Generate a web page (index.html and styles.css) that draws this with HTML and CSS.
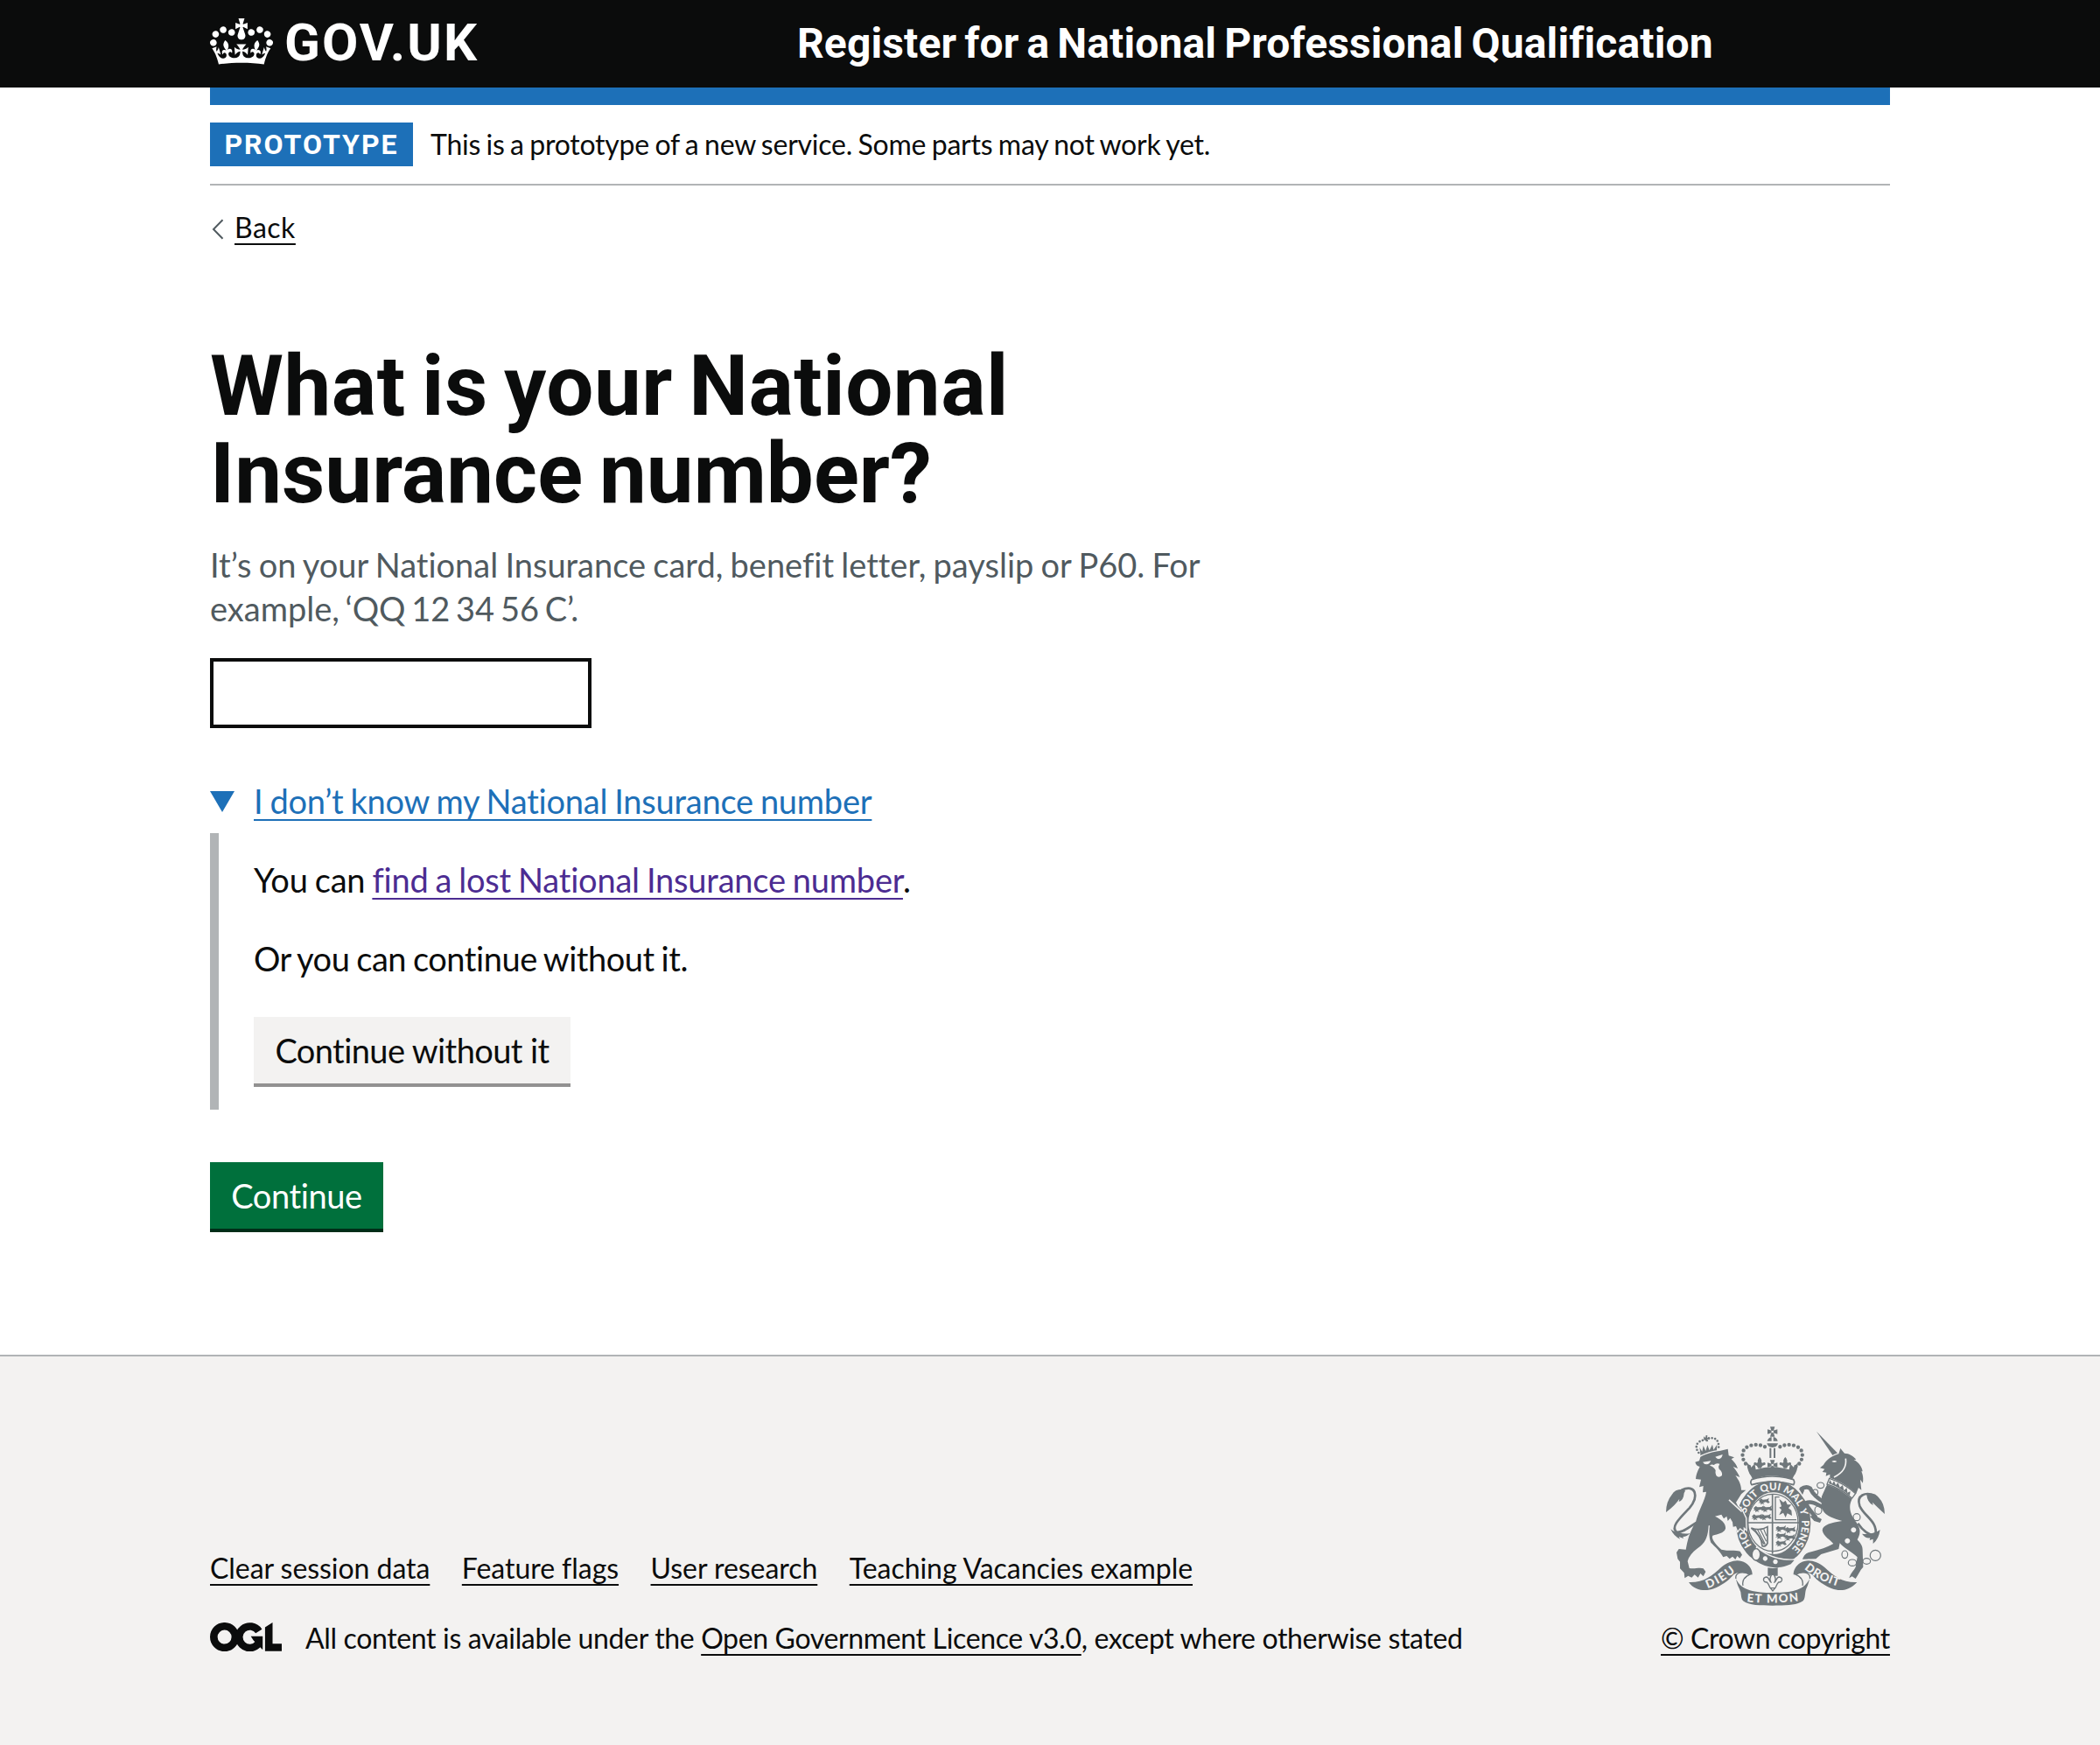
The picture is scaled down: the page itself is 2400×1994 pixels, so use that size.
FILE: index.html
```html
<!DOCTYPE html>
<html lang="en">
<head>
<meta charset="utf-8">
<title>What is your National Insurance number?</title>
<link rel="stylesheet" href="styles.css">
</head>
<body>
<header class="header">
  <div class="container header-inner">
    <a class="logo" href="#">
      <svg class="logo-crown" viewBox="0 0 132 97" aria-hidden="true"><path d="M25 30.2c3.5 1.5 7.7-.2 9.1-3.7 1.5-3.6-.2-7.8-3.9-9.2-3.6-1.4-7.6.3-9.1 3.9-1.4 3.5.3 7.5 3.9 9zM9 39.5c3.6 1.5 7.8-.2 9.2-3.7 1.5-3.6-.2-7.8-3.9-9.1-3.6-1.5-7.6.2-9.1 3.8-1.4 3.5.3 7.5 3.8 9zM4.4 57.2c3.5 1.5 7.7-.2 9.1-3.8 1.5-3.6-.2-7.7-3.9-9.1-3.5-1.5-7.6.3-9.1 3.8-1.4 3.5.3 7.6 3.9 9.1zm38.3-21.4c3.5 1.5 7.7-.2 9.1-3.8 1.5-3.6-.2-7.7-3.9-9.1-3.6-1.5-7.6.3-9.1 3.8-1.3 3.6.4 7.7 3.9 9.1zm64.4-5.6c-3.6 1.5-7.8-.2-9.1-3.7-1.5-3.6.2-7.8 3.8-9.2 3.6-1.4 7.7.3 9.2 3.9 1.3 3.5-.4 7.5-3.9 9zm15.9 9.3c-3.6 1.5-7.7-.2-9.1-3.7-1.5-3.6.2-7.8 3.7-9.1 3.6-1.5 7.7.2 9.2 3.8 1.5 3.5-.3 7.5-3.8 9zm4.7 17.7c-3.6 1.5-7.8-.2-9.2-3.8-1.5-3.6.2-7.7 3.9-9.1 3.6-1.5 7.7.3 9.2 3.8 1.3 3.5-.4 7.6-3.9 9.1zM89.3 35.8c-3.6 1.5-7.8-.2-9.2-3.8-1.4-3.6.2-7.7 3.9-9.1 3.6-1.5 7.7.3 9.2 3.8 1.4 3.6-.3 7.7-3.9 9.1zM69.7 17.7l8.9 4.7V9.3l-8.9 2.8c-.2-.3-.5-.6-.9-.9L72.4 0H59.6l3.5 11.2c-.3.3-.6.5-.9.9l-8.8-2.8v13.1l8.8-4.7c.3.3.6.7.9.9l-5 15.4v.1c-.2.8-.4 1.6-.4 2.4 0 4.1 3.1 7.5 7 8.1h.2c.3 0 .7.1 1 .1.4 0 .7 0 1-.1h.2c4-.6 7.1-4.1 7.1-8.1 0-.8-.1-1.7-.4-2.4V34l-5.1-15.4c.4-.2.7-.6 1-.9zM66 92.8c16.9 0 32.8 1.1 47.1 3.2 4-16.9 8.9-26.7 14-33.5l-9.6-3.4c1 4.9 1.1 7.2 0 10.2-1.5-1.4-3-4.3-4.2-8.7L108.6 76c2.8-2 5-3.2 7.5-3.3-4.4 9.4-10 11.9-13.6 11.2-4.3-.8-6.3-4.6-5.6-7.9 1-4.7 5.7-5.9 8-.5 4.3-8.7-3-11.4-7.6-8.8 7.1-7.2 7.9-13.5 2.1-21.1-8 6.1-8.1 12.3-4.5 20.8-4.7-5.4-12.1-2.5-9.5 6.2 3.4-5.2 7.9-2 7.2 3.1-.6 4.3-6.4 7.8-13.5 7.2-10.3-.9-10.9-8-11.2-13.8 2.5-.5 7.1 1.8 11 7.3L80.2 60c-4.1 4.4-8 5.3-12.3 5.4 1.4-4.4 8-11.6 8-11.6H55.5s6.4 7.2 7.9 11.6c-4.2-.1-8-1-12.3-5.4l1.4 16.4c3.9-5.5 8.5-7.7 10.9-7.3-.3 5.8-.9 12.8-11.1 13.8-7.2.6-12.9-2.9-13.5-7.2-.7-5 3.8-8.3 7.1-3.1 2.7-8.7-4.6-11.6-9.4-6.2 3.7-8.5 3.6-14.7-4.6-20.8-5.8 7.6-5 13.9 2.2 21.1-4.7-2.6-11.9.1-7.7 8.8 2.3-5.5 7.1-4.2 8.1.5.7 3.3-1.3 7.1-5.7 7.9-3.5.7-9-1.8-13.5-11.2 2.5.1 4.7 1.3 7.5 3.3l-4.7-15.4c-1.2 4.4-2.7 7.2-4.3 8.7-1.1-3-.9-5.3 0-10.2l-9.5 3.4c5 6.9 9.9 16.7 14 33.5 14.8-2.1 30.8-3.2 47.7-3.2z"/></svg>
      <span class="logo-text">GOV.UK</span>
    </a>
    <a class="service-name" href="#">Register for a National Professional Qualification</a>
  </div>
</header>

<div class="container">
  <div class="phase-banner">
    <strong class="tag">PROTOTYPE</strong>
    <span class="phase-text">This is a prototype of a new service. Some parts may not work yet.</span>
  </div>

  <a class="back-link" href="#">
    <svg class="chevron" viewBox="0 0 14 24" aria-hidden="true"><path d="M12.500 1.200L2 12l10.500 10.800"/></svg>
    <span class="underline">Back</span>
  </a>

  <main class="main">
    <h1 class="title"><span class="title-a">What is your National</span><br><span class="title-b">Insurance number?</span></h1>
    <p class="hint"><span class="hint-a">It’s on your National Insurance card, benefit letter, payslip or P60. For</span><br><span class="hint-b">example, ‘QQ 12 34 56 C’.</span></p>
    <input class="input" type="text" aria-label="National Insurance number">

    <div class="details">
      <div class="summary">
        <svg class="triangle" viewBox="0 0 28 24" aria-hidden="true"><path d="M0 0h28L14 24z"/></svg>
        <span class="underline">I don’t know my National Insurance number</span>
      </div>
      <div class="details-body">
        <p class="para">You can <a class="underline visited" href="#">find a lost National Insurance number</a>.</p>
        <p class="para para-or">Or you can continue without it.</p>
        <button class="button button-secondary">Continue without it</button>
      </div>
    </div>
    <button class="button button-primary">Continue</button>
  </main>
</div>

<footer class="footer">
  <div class="container footer-inner">
    <div class="footer-meta">
      <nav class="footer-links">
        <a class="underline" href="#">Clear session data</a>
        <a class="underline" href="#">Feature flags</a>
        <a class="underline" href="#">User research</a>
        <a class="underline" href="#">Teaching Vacancies example</a>
      </nav>
      <div class="licence">
        <svg class="ogl" viewBox="0 0 483.200 195.700" aria-label="OGL">
          <circle cx="97.800" cy="97.800" r="72.500"/>
          <path d="M329 59A72.500 72.500 0 1 0 325 144"/>
          <path class="ogl-fill" d="M275 93h80v88l-3 1-60-62zM370.800 32.400L421.500 0v142.800h61.700v50.700H370.800z"/>
        </svg>
        <span class="licence-text">All content is available under the <a class="underline" href="#">Open Government Licence v3.0</a>, except where otherwise stated</span>
      </div>
    </div>
    <div class="copyright">
      <svg class="crest" viewBox="72 58 750 616" aria-hidden="true">
        <defs>
          <path id="garter" d="M440 504A98 114 0 1 1 440.100 504"/>
          <path id="ribbon-left" d="M214 613Q266 596 322 546"/>
          <path id="ribbon-right" d="M546 546Q598 591 682 612"/>
          <path id="ribbon-mid" d="M345 658Q437 668 530 656"/>
          <g id="pattee"><path d="M-3 0l-5-17h16l-5 17 5 17h-16zM0-3l-17-5v16l17-5 17 5v-16z"/></g>
          <g id="fleur"><path d="M0-22q9 10 6 18l4 2q8-5 10 2 1 6-5 6-6 0-10 10h-10q-4-10-10-10-6 0-5-6 2-7 10-2l4-2q-3-8 6-18z"/></g>
          <g id="leopard"><path d="M2 10l8-7 6 4 14-1 7-5-2 9 5 6-6 3-8-4-9 3 5 6-8-3-6 3 1-7-8 2 5-5z"/></g>
        </defs>

        <!-- royal crown -->
        <use href="#pattee" x="437" y="76"/>
        <path d="M419 108q4-12 15-14v14zM440 94q12 2 15 14h-15zM418 116h38q-3 14-19 14t-19-14z"/>
        <path d="M427 132h6v34h-6zM441 132h6v34h-6z"/>
        <g class="beads"><path d="M357 196C330 180 326 137 352 128C375 116 400 120 418 132"/><path d="M517 196C544 180 548 137 522 128C499 116 474 120 456 132"/></g>
        <use href="#pattee" x="437" y="190"/>
        <use href="#fleur" x="393" y="185"/>
        <use href="#fleur" x="481" y="185"/>
        <path d="M350 182l14 16 12-12 4 20q57-18 114 0l4-20 12 12 14-16q0 30-14 46l-6 12q-67-26-134 0l-6-12q-14-16-14-46z"/>
        <path class="line" d="M366 240q70-22 143 0 6 10 0 18-72-22-143 0-7-9 0-18z"/>

        <!-- garter and shield -->
        <ellipse class="ring" cx="440" cy="390" rx="108" ry="126"/>
        <ellipse class="line thin" cx="439" cy="388" rx="86" ry="98"/>
        <path class="line" d="M437 290v205M352 388h176"/>
        <g class="charges">
          <use href="#leopard" x="388" y="302"/><use href="#leopard" x="370" y="328"/><use href="#leopard" x="398" y="328"/><use href="#leopard" x="364" y="356"/><use href="#leopard" x="394" y="356"/>
          <use href="#leopard" x="446" y="396"/><use href="#leopard" x="446" y="420"/><use href="#leopard" x="446" y="446"/>
          <use href="#leopard" x="478" y="400"/><use href="#leopard" x="476" y="426"/>
          <path d="M460 306l14 12 8-6 6 14 14 0-10 12 10 8 2 18-16-8-6 14-8-16-14 8 8-18-8-8 8-4z"/>
        </g>
        <path class="line thin" d="M447 380v-80h14M447 378h72"/>
        <path class="line" d="M364 406q30 12 56-4v56q-6 14-18 10-2-36-38-62z"/>
        <path class="line hair" d="M376 410l32 52M386 412l26 50M396 412l20 40M407 410l10 24"/>
        <g class="knock crest-motto">
          <text><textPath href="#garter" startOffset="17%">HO</textPath></text>
          <text><textPath href="#garter" startOffset="36%">SOIT</textPath></text>
          <text><textPath href="#garter" startOffset="48.500%">QUI</textPath></text>
          <text><textPath href="#garter" startOffset="60.500%">MAL</textPath></text>
          <text><textPath href="#garter" startOffset="69.500%">Y</textPath></text>
          <text><textPath href="#garter" startOffset="81.500%">PENSE</textPath></text>
        </g>
        <path class="halo" d="M384 476C420 504 460 520 512 516L500 530C450 552 410 540 378 518z"/>
        <ellipse class="buckle" cx="381" cy="497" rx="14" ry="20"/>
        <path class="knock" d="M412 503a8 8 0 1 0 .1 0zM447 514a8 8 0 1 0 .1 0z"/>

        <!-- lion -->
        <g class="small-beads"><path d="M184 148C170 130 174 108 205 104C240 88 256 104 252 136"/></g>
        <path d="M201 92l6 5 2-9 5 1-1 8 8-3 1 7-8 0 3 8-8 1-1-7-6 2zM190 152l-3-22 9 14 4-20 8 18 6-20 7 18 10-20 4 18 12-18-1 22q-30 4-56 16z"/>
        <path class="halo" d="M172 180L186 176L190 162C212 150 240 144 256 142L284 135L287 158L306 164L296 170C306 180 314 190 318 202L302 196C312 208 320 220 325 232L310 226C320 240 330 256 330 276L346 276L330 290L312 318L318 330L332 345L345 372L346 410L338 402L338 416L326 406L318 416L312 400L302 402L300 386L292 372L284 382L280 366L270 374L262 360L240 366C262 376 278 392 276 408C270 425 250 426 232 432C226 440 240 462 262 480C285 486 310 480 326 486L333 498L325 510L316 502L310 514L300 504L290 512L280 502L268 506C258 486 240 470 226 456C218 440 220 410 222 398L218 398C216 430 210 452 190 468C170 482 152 498 146 520L152 544C170 548 185 540 200 545L208 556L200 572L190 562L182 576L170 566L160 576L148 570L136 578L134 560L120 545L120 522L112 512L108 490L116 478L140 480C146 450 150 425 174 385C182 350 206 310 210 282L198 284L200 262L186 266L192 240L174 238C176 218 184 204 188 196C178 194 174 188 172 180z"/>
        <path class="knock" d="M198 180q14-2 28-4-6 12-14 12-10 0-14-8zM241 162l25-8q-2 14-14 16-6-2-11-8zM222 192q6-6 14-2 8-8 20-4-6 8-2 18 12 8 10 22-12 10-20 0-4-10-2-18-6-12-20-16z"/>
        <path class="knock-line" d="M288 310l44 40"/>
        <path class="line tail" d="M125 276C175 254 186 298 152 338C122 370 86 402 108 420C128 424 148 404 176 388"/>
        <path d="M72 352q0-36 20-60 12-22 44-18 4 6-2 12-2 26-18 30l2-10q-14 22-46 46zM88 410q14 12 30 12 18 6 36 2-10 12-24 12l2 6-16-6 4 8q-22-10-32-34z"/>

        <!-- unicorn -->
        <path d="M588 75l76 78-18 8z"/>
        <path class="halo" d="M600 200L612 190C622 172 640 160 664 152L670 133L684 150C700 150 716 160 724 172L716 172C734 182 744 196 746 212L742 212C750 230 748 245 747 252L738 240L742 276L732 268L724 288C700 266 668 244 634 234L634 222L620 228L622 216L608 214L616 204z"/>
        <path class="knock-line" d="M688 168q6 42-40 64"/>
        <path class="knock" d="M640 178q10-6 18 0-8 6-18 0z"/>
        <path class="line leg" d="M618 320C592 306 575 290 566 270C556 264 545 266 534 274M616 338C590 324 570 312 552 320C554 334 572 352 586 370"/>
        <path d="M624 258C660 268 690 290 710 306C700 326 700 345 712 368C722 384 734 398 736 412C738 424 734 436 728 446C738 458 746 466 746 480L748 540C736 552 732 566 722 580L710 572L700 578C704 562 716 552 722 540L728 506C712 490 680 474 668 458L664 478L604 496L586 512L540 513C545 498 555 490 570 488C600 480 625 472 646 460C636 446 612 436 608 414C610 394 640 388 676 382C650 374 620 366 610 346C604 330 604 310 606 298C612 284 618 270 624 258z"/>
        <path class="collar" d="M632 236q50 16 90 52l-12 16q-40-34-86-48z"/>
        <path d="M630 253l4-12 8 14 6-10 6 14 8-8 6 16 10-8 4 18 10-8 2 16 10-4-2 14q-30-26-72-42z"/>
        <path d="M540 264l-12 8 12 20 6-14zM556 314l-14 4-2 8 16 2zM580 362l26 14-6 12-20-6-14-16z"/>
        <path class="knock" d="M715 404a9 9 0 1 0 .1 0zM694 441a9 9 0 1 0 .1 0z"/>
        <g class="line chain"><ellipse cx="602" cy="260" rx="12" ry="10"/><ellipse cx="584" cy="284" rx="9" ry="10"/><ellipse cx="594" cy="345" rx="12" ry="14"/><circle cx="726" cy="369" r="12"/><ellipse cx="685" cy="497" rx="10" ry="13"/><ellipse cx="711" cy="525" rx="14" ry="11"/><ellipse cx="760" cy="520" rx="13" ry="10"/><circle cx="790" cy="500" r="18"/></g>
        <path class="line tail" d="M790 296C755 280 724 294 736 330C750 365 800 384 790 430C770 434 746 414 730 390"/>
        <path d="M822 358q0-36-22-58-14-16-40-8 2 26 22 36l-2-10q16 16 42 40zM806 412q-10 8-20 10-14 8-42 4 14 18 28 14l-2 8 12-4 0 16q20-16 24-48z"/>

        <!-- motto ribbon and pendant -->
        <path class="halo" d="M150 592C200 594 230 570 262 540C290 518 320 510 345 526C360 536 368 550 368 566C356 566 350 572 344 580C330 560 318 556 304 566C284 590 260 604 236 614C210 624 170 622 150 592z"/>
        <path class="halo" d="M727 592C677 594 647 570 615 540C587 518 557 510 532 526C517 536 509 550 509 566C521 566 527 572 533 580C547 560 559 556 573 566C593 590 617 604 641 614C667 624 700 622 727 592z"/>
        <path class="halo" d="M312 580C330 622 380 628 438 628C496 628 546 622 564 580C560 604 552 612 550 626C548 640 548 650 542 656C520 672 480 672 438 672C396 672 356 672 336 656C330 650 330 640 328 626C324 612 316 604 312 580z"/>
        <path class="curl" d="M312 580C306 556 340 554 358 566C340 574 332 586 336 604M565 580C570 556 536 554 518 566C536 574 544 586 540 604"/>
        <g class="knock crest-motto ribbon-text">
          <text><textPath href="#ribbon-left" textLength="112">DIEU</textPath></text>
          <text><textPath href="#ribbon-mid" startOffset="4" textLength="178">ET MON</textPath></text>
          <text><textPath href="#ribbon-right" textLength="132">DROIT</textPath></text>
        </g>
        <path d="M421 542q16 4 34 0v28h-10q-8-10-16 0h-8z"/>
        <path class="line thin" d="M438 562C450 574 450 582 444 592C450 592 450 574 460 574C474 576 472 594 458 592C450 600 450 608 446 612H430C426 608 426 600 418 592C404 594 402 576 416 574C426 574 426 592 432 592C426 582 426 574 438 562zM430 612h16l-8 10z"/>
      </svg>
      <a class="underline copyright-text" href="#">© Crown copyright</a>
    </div>
  </div>
</footer>
</body>
</html>
```
FILE: styles.css
```css
* {
  box-sizing: border-box;
}

body {
  margin: 0;
  min-height: 1994px;
  display: flex;
  flex-direction: column;
  background: #fff;
  color: #0b0c0c;
  font-family: Lato, "Open Sans", sans-serif;
  font-size: 38px;
  line-height: 50px;
  font-variant-ligatures: none;
}

a {
  color: inherit;
  text-decoration: none;
}

p {
  margin: 0;
}

.container {
  width: 1920px;
  margin: 0 auto;
}

.underline {
  text-decoration: underline;
  text-decoration-thickness: 2px;
  text-underline-offset: 6px;
  text-decoration-skip-ink: none;
}

/* Header */
.header {
  height: 100px;
  background: #0b0c0c;
  color: #fff;
  font-family: Roboto, sans-serif;
  font-weight: 700;
}

.header-inner {
  display: flex;
  height: 120px;
  border-bottom: 20px solid #1d70b8;
}

.logo {
  display: flex;
  width: 671px;
}

.logo-crown {
  width: 72px;
  height: 53px;
  margin-top: 21px;
  fill: currentColor;
}

.logo-text {
  margin-left: 13px;
  font-size: 60px;
  line-height: 98px;
  letter-spacing: 2.100px;
}

.service-name {
  font-size: 48px;
  line-height: 99px;
  letter-spacing: 0.120px;
  word-spacing: -3px;
  white-space: nowrap;
}

/* Phase banner */
.phase-banner {
  display: flex;
  align-items: center;
  gap: 20px;
  height: 92px;
  margin-top: 20px;
  border-bottom: 2px solid #b1b4b6;
  font-size: 32px;
}

.tag {
  width: 232px;
  height: 50px;
  background: #1d70b8;
  color: #fff;
  font-family: Roboto, sans-serif;
  font-weight: 700;
  line-height: 50px;
  letter-spacing: 2px;
  text-align: center;
}

.phase-text {
  letter-spacing: -0.230px;
  word-spacing: -1.500px;
}

/* Back link */
.back-link {
  display: flex;
  align-items: center;
  margin-top: 28px;
  font-size: 32px;
  line-height: 40px;
  letter-spacing: 0.500px;
}

.chevron {
  width: 14px;
  height: 24px;
  margin: 4px 12px 0 2px;
  fill: none;
  stroke: #505a5f;
  stroke-width: 2;
}

/* Question */
.main {
  padding-top: 111px;
}

.title {
  margin: 0 0 29px;
  font-family: Roboto, sans-serif;
  font-size: 96px;
  font-weight: 700;
  line-height: 100px;
}

.title-a {
  letter-spacing: 0.500px;
  word-spacing: -6px;
}

.title-b {
  letter-spacing: 0.050px;
  word-spacing: -5px;
}

.hint {
  color: #505a5f;
}

.hint-a {
  word-spacing: -1.500px;
}

.hint-b {
  word-spacing: -3px;
}

.input {
  display: block;
  width: 436px;
  height: 80px;
  margin: 32px 0 58px;
  padding: 10px;
  border: 4px solid #0b0c0c;
  border-radius: 0;
  background: #fff;
  font: inherit;
}

.summary {
  display: flex;
  color: #1d70b8;
  letter-spacing: -0.220px;
  word-spacing: -1.500px;
}

.triangle {
  width: 28px;
  height: 24px;
  margin: 14px 22px 0 0;
  fill: currentColor;
}

.details-body {
  height: 316px;
  margin: 12px 0 60px;
  padding: 28px 0 0 40px;
  border-left: 10px solid #b1b4b6;
}

.para {
  margin-bottom: 40px;
  letter-spacing: -0.200px;
  word-spacing: -1.500px;
}

.para-or {
  margin-bottom: 42px;
  letter-spacing: -0.450px;
}

.visited {
  color: #4c2c92;
}

.button {
  display: block;
  height: 76px;
  padding: 0;
  border: 0;
  font: inherit;
  line-height: 75px;
  text-align: center;
  letter-spacing: -0.580px;
}

.button-secondary {
  width: 362px;
  background: #f3f2f1;
  box-shadow: 0 4px 0 #929191;
  color: #0b0c0c;
}

.button-primary {
  width: 198px;
  background: #00703c;
  box-shadow: 0 4px 0 #002d18;
  color: #fff;
  letter-spacing: -0.400px;
}

/* Footer */
.footer {
  flex: 1;
  margin-top: 144px;
  padding-top: 80px;
  border-top: 2px solid #b1b4b6;
  background: #f3f2f1;
  font-size: 32px;
  line-height: 40px;
}

.footer-inner {
  display: flex;
  justify-content: space-between;
  align-items: flex-end;
  height: 262px;
}

.footer-links {
  display: flex;
  gap: 36.500px;
  margin-bottom: 40px;
  letter-spacing: -0.050px;
}

.licence {
  display: flex;
}

.ogl {
  width: 82px;
  height: 33.200px;
  margin: 2px 27px 0 0;
  fill: none;
  stroke: #0b0c0c;
  stroke-width: 50.700;
}

.ogl-fill {
  fill: #0b0c0c;
  stroke: none;
}

.licence-text {
  letter-spacing: -0.350px;
}

.copyright {
  display: flex;
  flex-direction: column;
  align-items: center;
  width: 262px;
}

.copyright-text {
  letter-spacing: -0.380px;
  white-space: nowrap;
}

/* Royal coat of arms */
.crest {
  width: 250px;
  height: 205.300px;
  margin-bottom: 17px;
  fill: #6f777b;
}

.line {
  fill: none;
  stroke: #6f777b;
  stroke-width: 5;
}

.thin {
  stroke-width: 4;
}

.curl,
.buckle,
.collar {
  fill: #f3f2f1;
  stroke: #6f777b;
  stroke-width: 4;
}

.hair,
.chain {
  stroke-width: 3.500;
}

.tail {
  stroke-width: 8;
}

.leg {
  stroke-width: 14;
}

.ring {
  fill: none;
  stroke: #6f777b;
  stroke-width: 40;
}

.halo {
  stroke: #f3f2f1;
  stroke-width: 8;
  paint-order: stroke;
}

.knock {
  fill: #f3f2f1;
}

.knock-line {
  fill: none;
  stroke: #f3f2f1;
  stroke-width: 5;
}

.beads,
.small-beads {
  fill: none;
  stroke: #6f777b;
  stroke-width: 13;
  stroke-linecap: round;
  stroke-dasharray: 0 16;
}

.small-beads {
  stroke-width: 8;
  stroke-dasharray: 0 11;
}

.crest-motto {
  font-family: Lato, sans-serif;
  font-size: 35px;
  font-weight: 900;
  text-anchor: middle;
}

.ribbon-text {
  font-size: 40px;
  text-anchor: start;
}
```
